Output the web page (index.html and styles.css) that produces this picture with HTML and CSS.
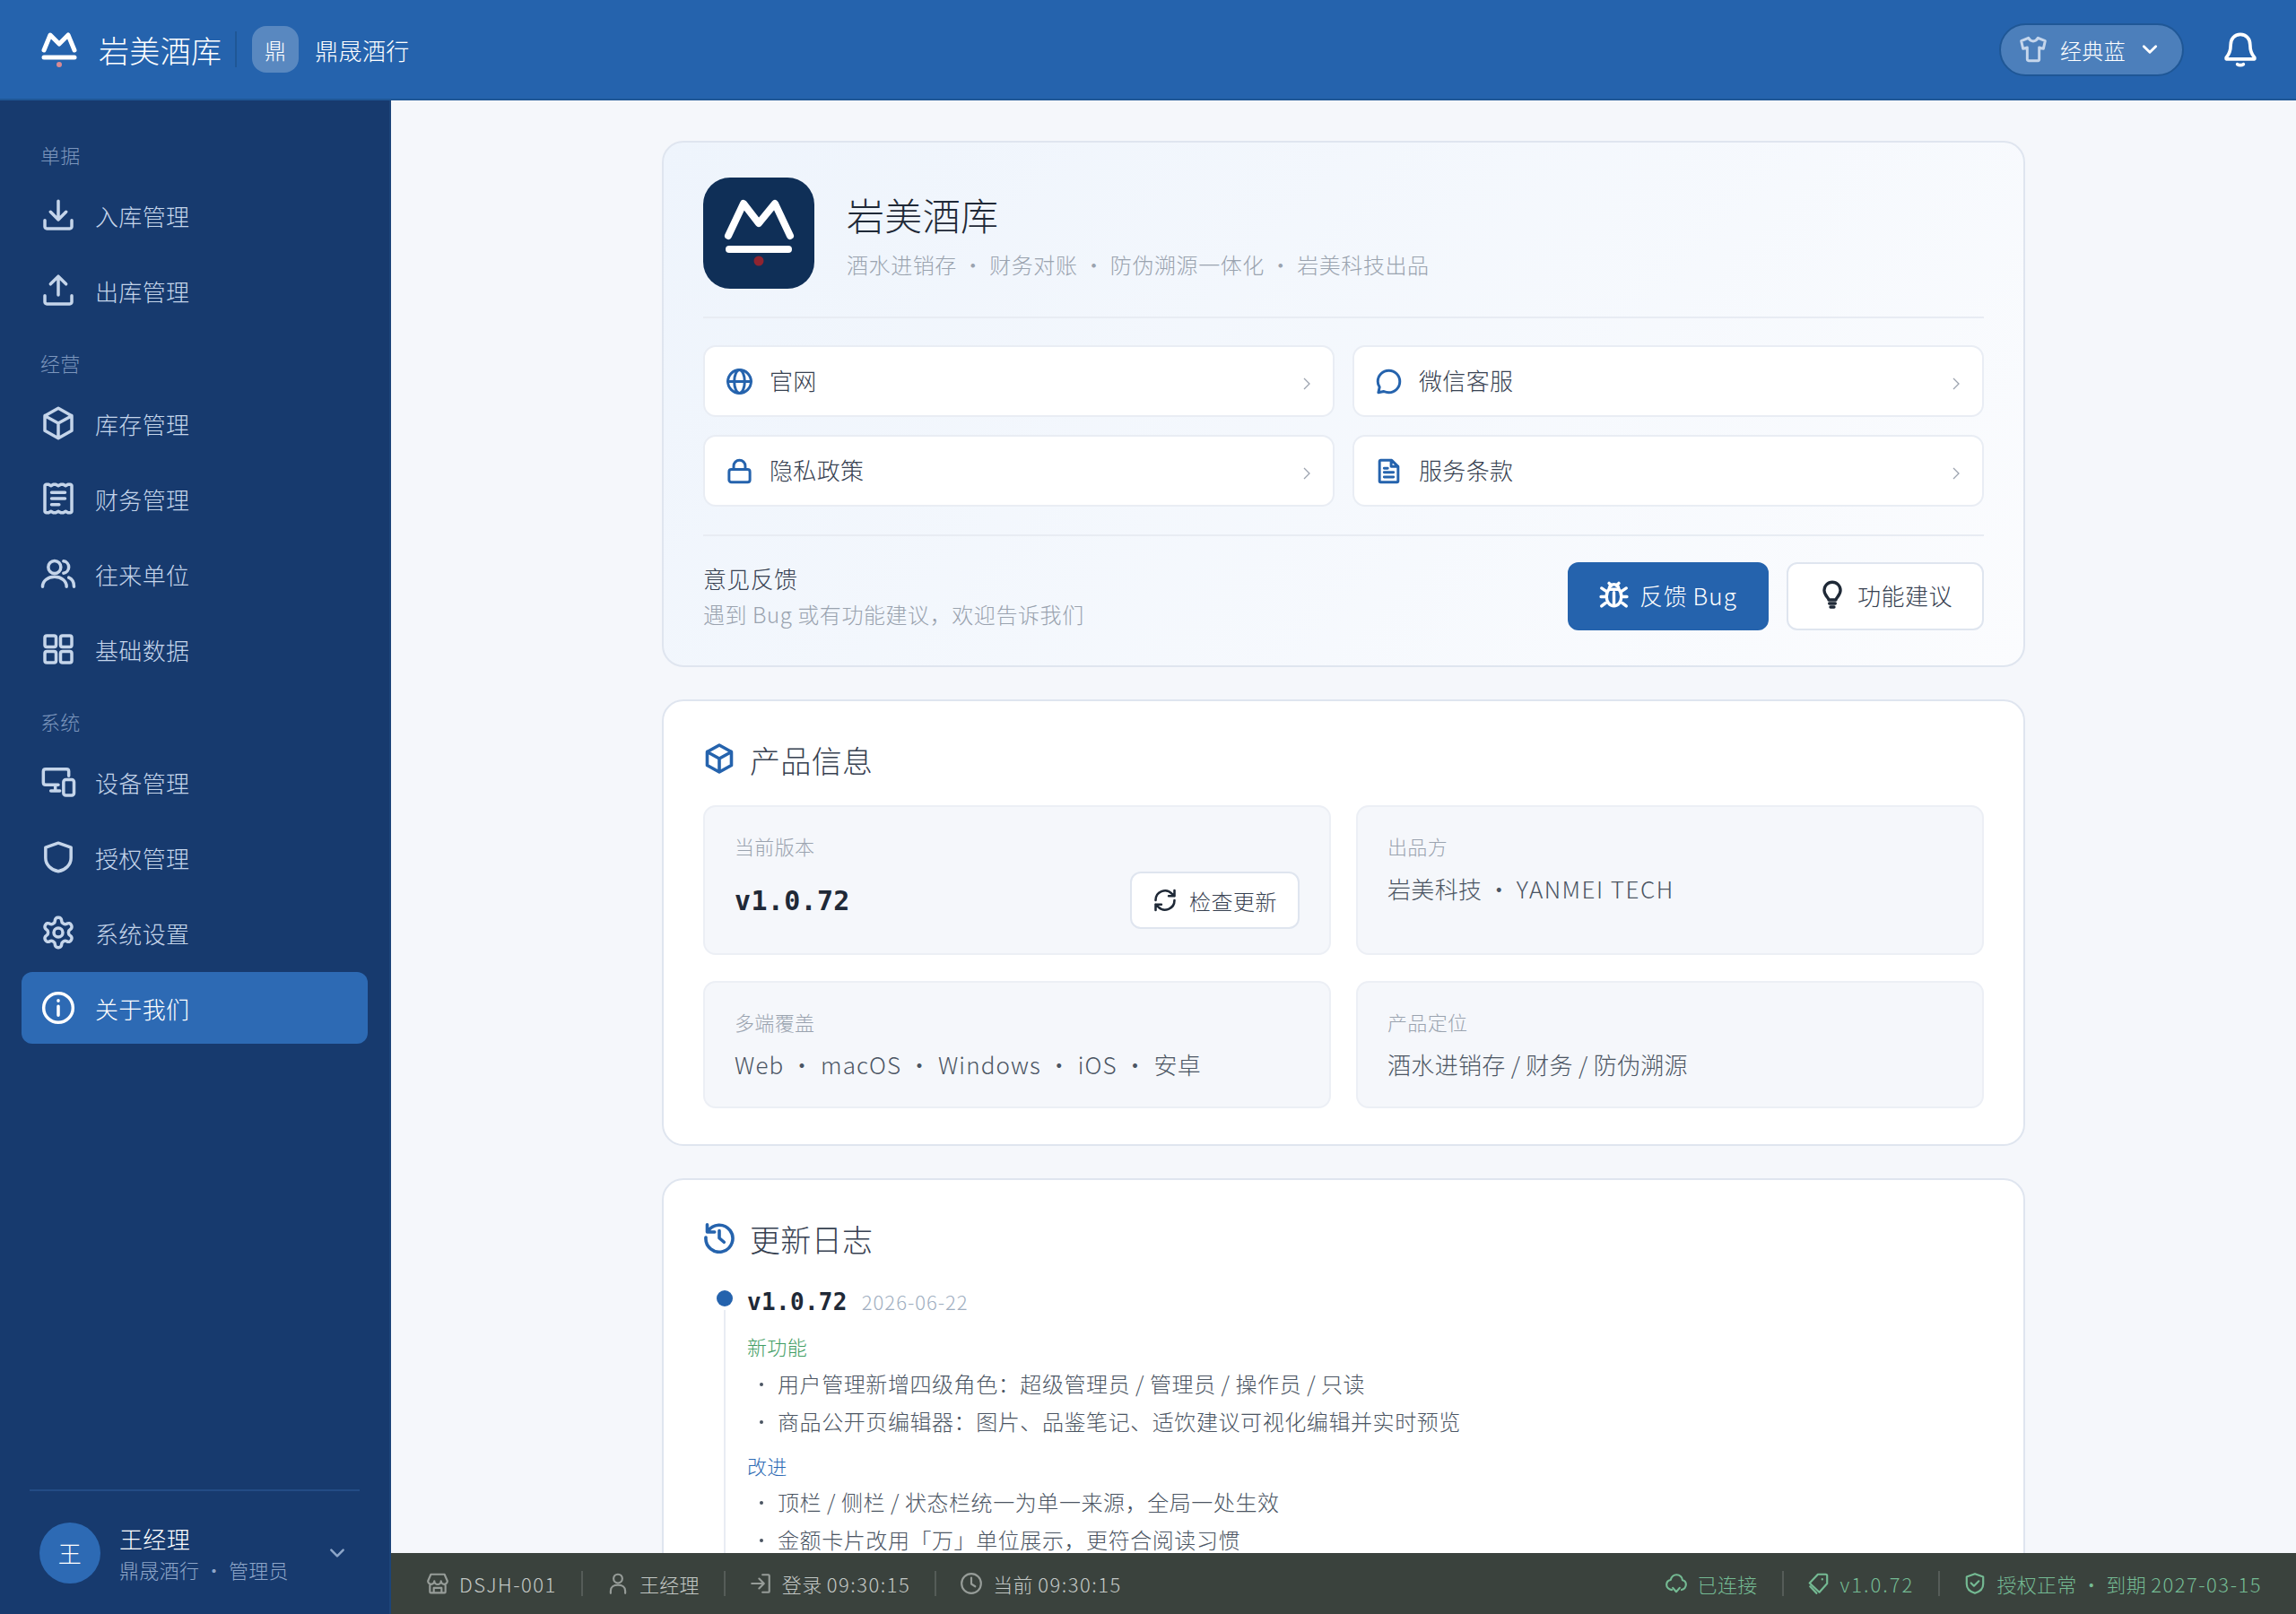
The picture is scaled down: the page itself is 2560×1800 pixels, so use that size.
FILE: index.html
```html
<!DOCTYPE html>
<html lang="zh-CN">
<head>
  <meta charset="UTF-8" />
  <title>关于我们 - 岩美酒库</title>
  <link rel="stylesheet" href="styles.css">
</head>
<body>
  <svg class="sprite" xmlns="http://www.w3.org/2000/svg">
    <symbol id="i-download" viewBox="0 0 24 24"><path d="M12 2.500v12.500M6.800 9.800l5.200 5.200 5.200-5.200M3 15.500v4.200c0 .7.600 1.300 1.300 1.300h15.400c.7 0 1.300-.6 1.300-1.300v-4.200"/></symbol>
    <symbol id="i-upload" viewBox="0 0 24 24"><path d="M12 15V2.500M6.800 7.700L12 2.500l5.200 5.200M3 15.500v4.200c0 .7.600 1.300 1.300 1.300h15.400c.7 0 1.300-.6 1.300-1.300v-4.200"/></symbol>
    <symbol id="i-box" viewBox="0 0 24 24"><path d="M12 2l9 5v10l-9 5-9-5V7zM3 7l9 5 9-5M12 12v10"/></symbol>
    <symbol id="i-receipt" viewBox="0 0 24 24"><path d="M4 2.500h1.500l1.600 1 1.600-1h1.600l1.700 1 1.700-1h1.600l1.600 1 1.600-1H20c.5 0 1 .5 1 1v17c0 .5-.5 1-1 1h-1.500l-1.600-1-1.600 1h-1.600l-1.700-1-1.700 1H8.700l-1.600-1-1.600 1H4c-.5 0-1-.5-1-1v-17c0-.5.5-1 1-1zM7.500 8h9M7.500 12h9M7.500 16h5"/></symbol>
    <symbol id="i-users" viewBox="0 0 24 24"><circle cx="9.500" cy="7.500" r="4.200"/><path d="M1.500 20.500c0-3.900 3.500-6.500 8-6.500s8 2.600 8 6.500M15.500 3.500c2 .2 3.500 2 3.500 4s-1.500 3.800-3.500 4M19 14.500c2.100.9 3.500 3 3.500 6"/></symbol>
    <symbol id="i-grid" viewBox="0 0 24 24"><rect x="3" y="3" width="7.500" height="7.500" rx="1.300"/><rect x="13.500" y="3" width="7.500" height="7.500" rx="1.300"/><rect x="3" y="13.500" width="7.500" height="7.500" rx="1.300"/><rect x="13.500" y="13.500" width="7.500" height="7.500" rx="1.300"/></symbol>
    <symbol id="i-devices" viewBox="0 0 24 24"><path d="M19 8V5c0-1-.7-1.500-1.500-1.500h-14C2.500 3.500 2 4.200 2 5v7.500c0 1 .7 1.500 1.500 1.500H12M7 18h6M10 14v4"/><rect x="15.500" y="10.500" width="7" height="10.500" rx="1.500"/></symbol>
    <symbol id="i-shield" viewBox="0 0 24 24"><path d="M12 2.500l8.500 3v7c0 4.500-3.500 8-8.500 9-5-1-8.500-4.500-8.500-9v-7z"/></symbol>
    <symbol id="i-gear" viewBox="0 0 24 24"><circle cx="12" cy="12" r="3"/><path d="M12.220 2h-.44a2 2 0 0 0-2 2v.18a2 2 0 0 1-1 1.730l-.43.25a2 2 0 0 1-2 0l-.15-.08a2 2 0 0 0-2.730.73l-.22.38a2 2 0 0 0 .73 2.730l.15.1a2 2 0 0 1 1 1.720v.51a2 2 0 0 1-1 1.740l-.15.09a2 2 0 0 0-.73 2.730l.22.38a2 2 0 0 0 2.730.73l.15-.08a2 2 0 0 1 2 0l.43.25a2 2 0 0 1 1 1.730V20a2 2 0 0 0 2 2h.44a2 2 0 0 0 2-2v-.18a2 2 0 0 1 1-1.730l.43-.25a2 2 0 0 1 2 0l.15.08a2 2 0 0 0 2.730-.73l.22-.39a2 2 0 0 0-.73-2.730l-.15-.08a2 2 0 0 1-1-1.740v-.5a2 2 0 0 1 1-1.740l.15-.09a2 2 0 0 0 .73-2.730l-.22-.38a2 2 0 0 0-2.730-.73l-.15.08a2 2 0 0 1-2 0l-.43-.25a2 2 0 0 1-1-1.730V4a2 2 0 0 0-2-2z"/></symbol>
    <symbol id="i-info" viewBox="0 0 24 24"><circle cx="12" cy="12" r="9.800"/><path d="M12 11v6M12 7v.3"/></symbol>
    <symbol id="i-globe" viewBox="0 0 24 24"><circle cx="12" cy="12" r="10"/><ellipse cx="12" cy="12" rx="4.500" ry="10"/><path d="M2 12h20"/></symbol>
    <symbol id="i-chat" viewBox="0 0 24 24"><path d="M12 2.500c5.200 0 9.500 4.200 9.500 9.500s-4.300 9.500-9.500 9.500c-1.500 0-3-.4-4.300-1L3 21.500l1-4.700C3 15.400 2.500 13.700 2.500 12 2.500 6.700 6.800 2.500 12 2.500z"/></symbol>
    <symbol id="i-lock" viewBox="0 0 24 24"><rect x="3" y="10.500" width="18" height="11" rx="2"/><path d="M7 10.500V7.500a5 5 0 0 1 10 0v3"/></symbol>
    <symbol id="i-doc" viewBox="0 0 24 24"><path d="M5 2.500h9.500l5.500 5.500v12.500c0 .6-.4 1-1 1H5c-.6 0-1-.4-1-1v-17c0-.6.400-1 1-1zM14 2.500V8h6M8 9.500h3M8 13h8M8 17h8"/></symbol>
    <symbol id="i-bug" viewBox="0 0 24 24"><path d="M8 7.500h8c1.500 1.500 2 3.500 2 6 0 4-2.500 7.500-6 7.500s-6-3.500-6-7.500c0-2.500.5-4.500 2-6zM8 7.500c0-2.500 1.800-4 4-4s4 1.500 4 4M12 10v11M8 2.500l1.800 2M16 2.500l-1.800 2M2 6.500L6.500 9.500M22 6.500L17.500 9.500M1.500 13.500H6M22.500 13.500H18M2 21l4.500-3.500M22 21l-4.500-3.500"/></symbol>
    <symbol id="i-bulb" viewBox="0 0 24 24"><path d="M9 16.500c0-2-3.800-3.500-3.800-8a6.800 6.800 0 0 1 13.600 0c0 4.500-3.800 6-3.800 8zM9.500 19.500h5M10.500 22.500h3"/></symbol>
    <symbol id="i-refresh" viewBox="0 0 24 24"><path d="M3 12a9 9 0 0 1 15.500-6.300L21 8M21 2.500V8h-5.500M21 12a9 9 0 0 1-15.500 6.300L3 16M3 21.500V16h5.500"/></symbol>
    <symbol id="i-history" viewBox="0 0 24 24"><path d="M3.500 7.500A10 10 0 1 1 2 12M3 2.500v5.500h5.500M12 7v5.500l3.500 3"/></symbol>
    <symbol id="i-store" viewBox="0 0 24 24"><path d="M5 2.500h14l3 7a3.300 3.300 0 0 1-6.600 0 3.400 3.400 0 0 1-6.800 0 3.300 3.300 0 0 1-6.600 0zM4 12.500v8c0 .6.400 1 1 1h14c.6 0 1-.4 1-1v-8M8 21.500v-5h8v5"/></symbol>
    <symbol id="i-user" viewBox="0 0 24 24"><circle cx="12" cy="7" r="4.500"/><path d="M4.500 22v-2.500c0-3.500 3-6 7.500-6s7.500 2.500 7.500 6V22"/></symbol>
    <symbol id="i-login" viewBox="0 0 24 24"><path d="M14 3h6c.6 0 1 .4 1 1v16c0 .6-.4 1-1 1h-6M3 12h12M10.500 7l5 5-5 5"/></symbol>
    <symbol id="i-clock" viewBox="0 0 24 24"><circle cx="12" cy="12" r="10"/><path d="M12 6v6.500l4 2.500"/></symbol>
    <symbol id="i-cloud" viewBox="0 0 24 24"><path d="M7.500 18.500C4.500 18.500 2 16 2 13.300c0-2.600 1.800-4.600 4.200-5C7 5.300 9.300 3 12.300 3c3.300 0 5.900 2.500 6.100 5.500 2.100.4 3.600 2.300 3.600 4.500 0 2.700-2 5-4.500 5.500M8.500 16.500l3.500 4 3.500-4"/></symbol>
    <symbol id="i-tag" viewBox="0 0 24 24"><path d="M11 2.500h8c.8 0 1.500.7 1.500 1.500v8l-8 9-10-9.500zM15.500 7.500v.3M3 15l6.500 7"/></symbol>
    <symbol id="i-shieldok" viewBox="0 0 24 24"><path d="M12 2l8.500 3v7.500c0 4.500-3.500 8-8.500 9.500-5-1.500-8.500-5-8.500-9.500V5zM8 11.500l3 3 5-5"/></symbol>
    <symbol id="i-shirt" viewBox="0 0 24 24"><path d="M8 2.500c1 1.800 2.300 2.700 4 2.700s3-.9 4-2.700l6 2.500-1.500 6.500-3.500-1v10c0 .6-.4 1-1 1H8c-.6 0-1-.4-1-1v-10l-3.500 1L2 5z"/></symbol>
    <symbol id="i-chevron" viewBox="0 0 24 24"><path d="M4 8l8 8 8-8"/></symbol>
    <symbol id="i-bell" viewBox="0 0 24 24"><path d="M12 2c4 0 6.500 3 6.500 7 0 4 .6 6 3 8.500v1H2.500v-1c2.400-2.500 3-4.500 3-8.500 0-4 2.500-7 6.500-7zM10 22c1 .7 3 .7 4 0"/></symbol>
    <symbol id="i-arrow" viewBox="0 0 8 14"><path d="M1 1l6 6-6 6"/></symbol>
  </svg>

  <div class="app">
    <header class="topbar">
      <div class="brand">
        <svg class="brand-logo" viewBox="0 0 40 40"><path class="logo-peak" d="M3 21L10 4l10 10L30 4l7 17"/><path class="logo-base" d="M3 29h34"/><circle class="logo-dot" cx="20" cy="37" r="3"/></svg>
        <span class="brand-name">岩美酒库</span>
        <span class="brand-sep"></span>
        <span class="org-chip">鼎</span>
        <span class="org-name">鼎晟酒行</span>
      </div>
      <div class="top-actions">
        <div class="theme-pill">
          <svg class="icon shirt"><use href="#i-shirt"/></svg>
          <span>经典蓝</span>
          <svg class="icon pill-chevron"><use href="#i-chevron"/></svg>
        </div>
        <svg class="icon bell"><use href="#i-bell"/></svg>
      </div>
    </header>

    <div class="layout">
      <aside class="sidebar">
        <nav class="nav">
          <div class="nav-label">单据</div>
          <a class="nav-item"><svg class="icon"><use href="#i-download"/></svg><span>入库管理</span></a>
          <a class="nav-item"><svg class="icon"><use href="#i-upload"/></svg><span>出库管理</span></a>
          <div class="nav-label">经营</div>
          <a class="nav-item"><svg class="icon"><use href="#i-box"/></svg><span>库存管理</span></a>
          <a class="nav-item"><svg class="icon"><use href="#i-receipt"/></svg><span>财务管理</span></a>
          <a class="nav-item"><svg class="icon"><use href="#i-users"/></svg><span>往来单位</span></a>
          <a class="nav-item"><svg class="icon"><use href="#i-grid"/></svg><span>基础数据</span></a>
          <div class="nav-label">系统</div>
          <a class="nav-item"><svg class="icon"><use href="#i-devices"/></svg><span>设备管理</span></a>
          <a class="nav-item"><svg class="icon"><use href="#i-shield"/></svg><span>授权管理</span></a>
          <a class="nav-item"><svg class="icon"><use href="#i-gear"/></svg><span>系统设置</span></a>
          <a class="nav-item active"><svg class="icon"><use href="#i-info"/></svg><span>关于我们</span></a>
        </nav>
        <div class="user-box">
          <div class="avatar">王</div>
          <div class="user-text">
            <div class="user-name">王经理</div>
            <div class="user-sub">鼎晟酒行 · 管理员</div>
          </div>
          <svg class="icon user-chevron"><use href="#i-chevron"/></svg>
        </div>
      </aside>

      <div class="right">
        <main class="main">
          <div class="content">
            <section class="card hero">
              <div class="hero-head">
                <div class="app-logo">
                  <svg viewBox="0 0 124 124"><path class="logo-peak" d="M28 65L45 29l17 22 18-22 17 36"/><path class="logo-base" d="M29 80h66"/><circle class="app-dot" cx="62" cy="93" r="5.500"/></svg>
                </div>
                <div>
                  <h1>岩美酒库</h1>
                  <p class="hero-sub">酒水进销存 · 财务对账 · 防伪溯源一体化 · 岩美科技出品</p>
                </div>
              </div>
              <div class="link-grid">
                <a class="link-row"><svg class="icon"><use href="#i-globe"/></svg><span>官网</span><svg class="link-arrow"><use href="#i-arrow"/></svg></a>
                <a class="link-row"><svg class="icon"><use href="#i-chat"/></svg><span>微信客服</span><svg class="link-arrow"><use href="#i-arrow"/></svg></a>
                <a class="link-row"><svg class="icon"><use href="#i-lock"/></svg><span>隐私政策</span><svg class="link-arrow"><use href="#i-arrow"/></svg></a>
                <a class="link-row"><svg class="icon"><use href="#i-doc"/></svg><span>服务条款</span><svg class="link-arrow"><use href="#i-arrow"/></svg></a>
              </div>
              <div class="feedback">
                <div class="feedback-text">
                  <div class="feedback-title">意见反馈</div>
                  <div class="feedback-sub">遇到 Bug 或有功能建议，欢迎告诉我们</div>
                </div>
                <button class="btn btn-primary"><svg class="icon"><use href="#i-bug"/></svg><span>反馈 <span class="en-wide">Bug</span></span></button>
                <button class="btn btn-plain"><svg class="icon"><use href="#i-bulb"/></svg>功能建议</button>
              </div>
            </section>

            <section class="card">
              <h2><svg class="icon"><use href="#i-box"/></svg>产品信息</h2>
              <div class="info-grid">
                <div class="info-cell tall">
                  <div class="info-label">当前版本</div>
                  <div class="version-row">
                    <span class="version">v1.0.72</span>
                    <button class="btn-check"><svg class="icon"><use href="#i-refresh"/></svg>检查更新</button>
                  </div>
                </div>
                <div class="info-cell tall">
                  <div class="info-label">出品方</div>
                  <div class="info-value">岩美科技 · <span class="en">YANMEI TECH</span></div>
                </div>
                <div class="info-cell">
                  <div class="info-label">多端覆盖</div>
                  <div class="info-value"><span class="en-wide">Web · macOS · Windows · iOS · </span>安卓</div>
                </div>
                <div class="info-cell">
                  <div class="info-label">产品定位</div>
                  <div class="info-value">酒水进销存 / 财务 / 防伪溯源</div>
                </div>
              </div>
            </section>

            <section class="card">
              <h2><svg class="icon"><use href="#i-history"/></svg>更新日志</h2>
              <div class="log">
                <div class="log-head"><span class="log-ver">v1.0.72</span><span class="log-date">2026-06-22</span></div>
                <div class="log-tag new">新功能</div>
                <ul>
                  <li>用户管理新增四级角色：超级管理员 / 管理员 / 操作员 / 只读</li>
                  <li>商品公开页编辑器：图片、品鉴笔记、适饮建议可视化编辑并实时预览</li>
                </ul>
                <div class="log-tag imp">改进</div>
                <ul>
                  <li>顶栏 / 侧栏 / 状态栏统一为单一来源，全局一处生效</li>
                  <li>金额卡片改用「万」单位展示，更符合阅读习惯</li>
                </ul>
              </div>
            </section>
          </div>
        </main>

        <footer class="statusbar">
          <div class="status-group">
            <span class="status-item"><svg class="icon"><use href="#i-store"/></svg><span class="en">DSJH-001</span></span>
            <span class="status-item"><svg class="icon"><use href="#i-user"/></svg>王经理</span>
            <span class="status-item"><svg class="icon"><use href="#i-login"/></svg><span>登录 <span class="en">09:30:15</span></span></span>
            <span class="status-item"><svg class="icon"><use href="#i-clock"/></svg><span>当前 <span class="en">09:30:15</span></span></span>
          </div>
          <div class="status-group ok">
            <span class="status-item"><svg class="icon"><use href="#i-cloud"/></svg>已连接</span>
            <span class="status-item"><svg class="icon"><use href="#i-tag"/></svg><span class="en-ver">v1.0.72</span></span>
            <span class="status-item"><svg class="icon"><use href="#i-shieldok"/></svg><span>授权正常 · 到期 <span class="en-date">2027-03-15</span></span></span>
          </div>
        </footer>
      </div>
    </div>
  </div>
</body>
</html>
```
FILE: styles.css
```css
* {
  box-sizing: border-box;
}
html, body {
  height: 100%;
}
body {
  margin: 0;
  font-family: "Noto Sans CJK SC", "Noto Sans", sans-serif;
  font-weight: 200;
  letter-spacing: 0.02em;
  color: #374151;
  background: #f5f7fb;
}
.sprite {
  display: none;
}
.icon {
  width: 36px;
  height: 36px;
  flex: none;
  fill: none;
  stroke: currentColor;
  stroke-width: 2;
  stroke-linecap: round;
  stroke-linejoin: round;
}
.en {
  letter-spacing: 1.5px;
}
.en-wide {
  letter-spacing: 1.1px;
}
.en-ver {
  letter-spacing: 2px;
}
.en-date {
  letter-spacing: 1.5px;
}
.app {
  height: 100vh;
  display: flex;
  flex-direction: column;
  overflow: hidden;
}

/* top bar */
.topbar {
  height: 112px;
  flex: none;
  background: #2563ad;
  border-bottom: 2px solid #1f5796;
  color: #fff;
  display: flex;
  align-items: center;
  justify-content: space-between;
  padding: 0 42px 0 46px;
}
.brand {
  display: flex;
  align-items: center;
}
.brand-logo {
  width: 40px;
  height: 40px;
  margin-right: 24px;
}
.logo-peak, .logo-base {
  fill: none;
  stroke: #fff;
  stroke-width: 5;
  stroke-linecap: round;
  stroke-linejoin: round;
}
.logo-dot {
  fill: #d98a93;
}
.brand-name {
  font-size: 34px;
  line-height: 50px;
  padding-top: 2px;
}
.brand-sep {
  width: 2px;
  height: 40px;
  background: #1f5796;
  margin: 0 17px 0 15px;
}
.org-chip {
  width: 52px;
  height: 52px;
  border-radius: 16px;
  background: rgba(255, 255, 255, 0.24);
  font-size: 24px;
  display: flex;
  align-items: center;
  justify-content: center;
}
.org-name {
  font-size: 26px;
  margin-left: 18px;
}
.top-actions {
  display: flex;
  align-items: center;
  gap: 43px;
}
.theme-pill {
  width: 206px;
  height: 59px;
  border-radius: 30px;
  border: 2px solid #1f5796;
  background: rgba(255, 255, 255, 0.18);
  display: flex;
  align-items: center;
  padding-left: 20px;
  font-size: 24px;
}
.shirt {
  width: 32px;
  height: 32px;
  color: #c5d6ec;
  margin-right: 14px;
  stroke-width: 2.2;
}
.pill-chevron {
  width: 20px;
  height: 20px;
  margin-left: 17px;
  stroke-width: 3.4;
}
.bell {
  width: 40px;
  height: 40px;
  stroke-width: 2.2;
}

/* sidebar */
.layout {
  flex: 1;
  display: flex;
  min-height: 0;
}
.sidebar {
  width: 436px;
  flex: none;
  background: #173a6e;
  border-right: 2px solid #1c4479;
  display: flex;
  flex-direction: column;
  justify-content: space-between;
}
.nav {
  padding: 46px 24px 0;
  display: flex;
  flex-direction: column;
  gap: 4px;
}
.nav-label {
  font-size: 22px;
  line-height: 28px;
  color: #7c96bd;
  padding-left: 21px;
  margin: 22px 0 10px;
}
.nav-label:first-child {
  margin-top: 0;
}
.nav-item {
  height: 80px;
  border-radius: 12px;
  display: flex;
  align-items: center;
  gap: 21px;
  padding-left: 21px;
  font-size: 26px;
  color: #c5d5ea;
}
.nav-item .icon {
  width: 40px;
  height: 40px;
  stroke-width: 2.1;
}
.nav-item.active {
  background: #2d6ab4;
  color: #fff;
}
.user-box {
  margin: 0 33px;
  height: 139px;
  border-top: 2px solid #234c85;
  display: flex;
  align-items: center;
  padding-left: 11px;
}
.avatar {
  width: 68px;
  height: 68px;
  border-radius: 50%;
  background: #2d6ab4;
  color: #fff;
  font-size: 26px;
  display: flex;
  align-items: center;
  justify-content: center;
  margin-right: 21px;
}
.user-text {
  flex: 1;
}
.user-name {
  font-size: 26px;
  line-height: 36px;
  color: #fff;
  margin-bottom: 1px;
}
.user-sub {
  font-size: 22px;
  line-height: 30px;
  color: #8ea6c9;
}
.user-chevron {
  width: 20px;
  height: 20px;
  color: #8ea6c9;
  margin-right: 15px;
  stroke-width: 3;
}

/* main */
.right {
  flex: 1;
  min-width: 0;
  display: flex;
  flex-direction: column;
}
.main {
  flex: 1;
  min-height: 0;
  overflow: hidden;
  padding-top: 45px;
}
.content {
  width: 1520px;
  margin: 0 auto;
  display: flex;
  flex-direction: column;
  gap: 36px;
}
.card {
  background: #fff;
  border: 2px solid #dfe5ef;
  border-radius: 24px;
  padding: 41px 44px 40px;
}
.hero {
  background: linear-gradient(135deg, #eef4fc 0%, #fbfcfe 100%);
  padding: 39px 44px 39px;
}
.hero-head {
  display: flex;
  gap: 36px;
  padding-bottom: 31px;
  border-bottom: 2px solid #e8ecf3;
}
.app-logo {
  width: 124px;
  height: 124px;
  border-radius: 30px;
  background: #0f2f57;
  flex: none;
}
.app-logo svg {
  display: block;
}
.app-logo .logo-peak, .app-logo .logo-base {
  stroke-width: 8;
}
.app-dot {
  fill: #8f2430;
}
h1 {
  font-size: 42px;
  font-weight: 200;
  line-height: 60px;
  margin: 11px 0 0;
  color: #1f2937;
}
.hero-sub {
  font-size: 24px;
  line-height: 34px;
  letter-spacing: 0.024em;
  margin: 9px 0 0;
  color: #9aa3af;
}
.link-grid {
  display: grid;
  grid-template-columns: 1fr 1fr;
  gap: 20px;
  padding: 30px 0 31px;
  border-bottom: 2px solid #e8ecf3;
}
.link-row {
  height: 80px;
  background: #fff;
  border: 2px solid #e9edf4;
  border-radius: 14px;
  display: flex;
  align-items: center;
  padding: 0 25px 0 23px;
  font-size: 26px;
  color: #374151;
}
.link-row .icon {
  width: 31px;
  height: 31px;
  color: #2563ad;
  margin-right: 18px;
  stroke-width: 2.3;
}
.link-row span {
  flex: 1;
  margin-bottom: 3px;
}
.link-arrow {
  width: 8px;
  height: 14px;
  margin-top: 5px;
  fill: none;
  stroke: #9ca3af;
  stroke-width: 1.3;
}
.feedback {
  display: flex;
  align-items: center;
  gap: 20px;
  padding-top: 28px;
}
.feedback-text {
  flex: 1;
}
.feedback-title {
  font-size: 26px;
  line-height: 38px;
  margin-bottom: 3px;
  color: #374151;
}
.feedback-sub {
  font-size: 24px;
  line-height: 36px;
  letter-spacing: 0.024em;
  color: #9aa3af;
}
.btn {
  height: 76px;
  border-radius: 12px;
  font: inherit;
  font-size: 26px;
  letter-spacing: 0.02em;
  display: flex;
  align-items: center;
  justify-content: center;
  gap: 12px;
  padding: 0 0 3px;
  border: 2px solid #dfe5ef;
  background: #fff;
  color: #374151;
}
.btn .icon {
  width: 33px;
  height: 33px;
  stroke-width: 2.5;
}
.btn-primary {
  width: 224px;
  background: #2563ad;
  border-color: #2563ad;
  color: #fff;
}
.btn-plain {
  width: 220px;
}
.btn-plain .icon {
  color: #1f2937;
  width: 32px;
  height: 32px;
}
h2 {
  display: flex;
  align-items: center;
  gap: 16px;
  font-size: 34px;
  font-weight: 200;
  line-height: 50px;
  margin: 0 0 25px;
  color: #374151;
}
h2 .icon {
  width: 36px;
  height: 36px;
  margin-top: -4px;
  color: #2563ad;
  stroke-width: 2.4;
}
.info-grid {
  display: grid;
  grid-template-columns: 1fr 1fr;
  gap: 29px 28px;
}
.info-cell {
  background: #f5f7fb;
  border: 2px solid #eceff5;
  border-radius: 14px;
  padding: 27px 33px 0;
  height: 142px;
}
.info-cell.tall {
  height: 167px;
}
.info-label {
  font-size: 22px;
  line-height: 32px;
  color: #9aa3af;
}
.info-value {
  font-size: 26px;
  line-height: 38px;
  margin-top: 13px;
  color: #4b5563;
}
.version-row {
  display: flex;
  align-items: center;
  justify-content: space-between;
  margin-top: 13px;
}
.version {
  font-family: "DejaVu Sans Mono", monospace;
  font-weight: 700;
  font-size: 30px;
  color: #1f2937;
}
.btn-check {
  width: 189px;
  height: 64px;
  border-radius: 12px;
  border: 2px solid #dfe5ef;
  background: #fff;
  font: inherit;
  font-size: 24px;
  letter-spacing: 0.02em;
  color: #374151;
  display: flex;
  align-items: center;
  justify-content: center;
  gap: 13px;
  padding: 0;
}
.btn-check .icon {
  width: 28px;
  height: 28px;
  color: #1f2937;
  stroke-width: 2.2;
}

/* changelog */
.log {
  position: relative;
  margin: -1px 0 0 23px;
  padding-left: 26px;
}
.log::before {
  content: "";
  position: absolute;
  left: 0;
  top: 30px;
  bottom: 0;
  width: 2px;
  background: #e8ecf3;
}
.log-head {
  position: relative;
  display: flex;
  align-items: baseline;
  gap: 16px;
  line-height: 40px;
}
.log-head::before {
  content: "";
  position: absolute;
  left: -34px;
  top: 8px;
  width: 18px;
  height: 18px;
  border-radius: 50%;
  background: #2563ad;
}
.log-ver {
  font-family: "DejaVu Sans Mono", monospace;
  font-weight: 700;
  font-size: 26px;
  color: #1f2937;
}
.log-date {
  font-size: 22px;
  letter-spacing: 1px;
  color: #a0aec0;
}
.log-tag {
  font-size: 22px;
  line-height: 30px;
  margin-top: 14px;
}
.log-tag.new {
  color: #3f9d63;
}
.log-tag.imp {
  color: #2d6ab4;
  margin-top: 13px;
}
.log ul {
  list-style: none;
  margin: 5px 0 0;
  padding: 0;
}
.log-tag.new + ul {
  margin-top: 6px;
}
.log li {
  font-size: 24px;
  line-height: 42px;
  letter-spacing: 0.024em;
  color: #4b5563;
  padding-left: 34px;
  position: relative;
}
.log li::before {
  content: "";
  position: absolute;
  left: 14px;
  top: 20px;
  width: 4px;
  height: 4px;
  border-radius: 50%;
  background: #4b5563;
}

/* status bar */
.statusbar {
  height: 68px;
  flex: none;
  background: #3a423d;
  display: flex;
  align-items: center;
  justify-content: space-between;
  padding: 0 38px 0 39px;
  font-size: 22px;
  color: #c3c8c5;
}
.status-group {
  display: flex;
  align-items: center;
}
.status-item {
  display: flex;
  align-items: center;
  gap: 11px;
  padding: 0 27px 0 26px;
  border-left: 2px solid #555c58;
  line-height: 28px;
}
.status-item:first-child {
  border-left: none;
  padding-left: 0;
}
.status-item:last-child {
  padding-right: 0;
}
.status-item .icon {
  width: 26px;
  height: 26px;
  color: #969c98;
}
.status-group.ok {
  color: #74ba93;
}
.status-group.ok .icon {
  color: #74ba93;
}
```
